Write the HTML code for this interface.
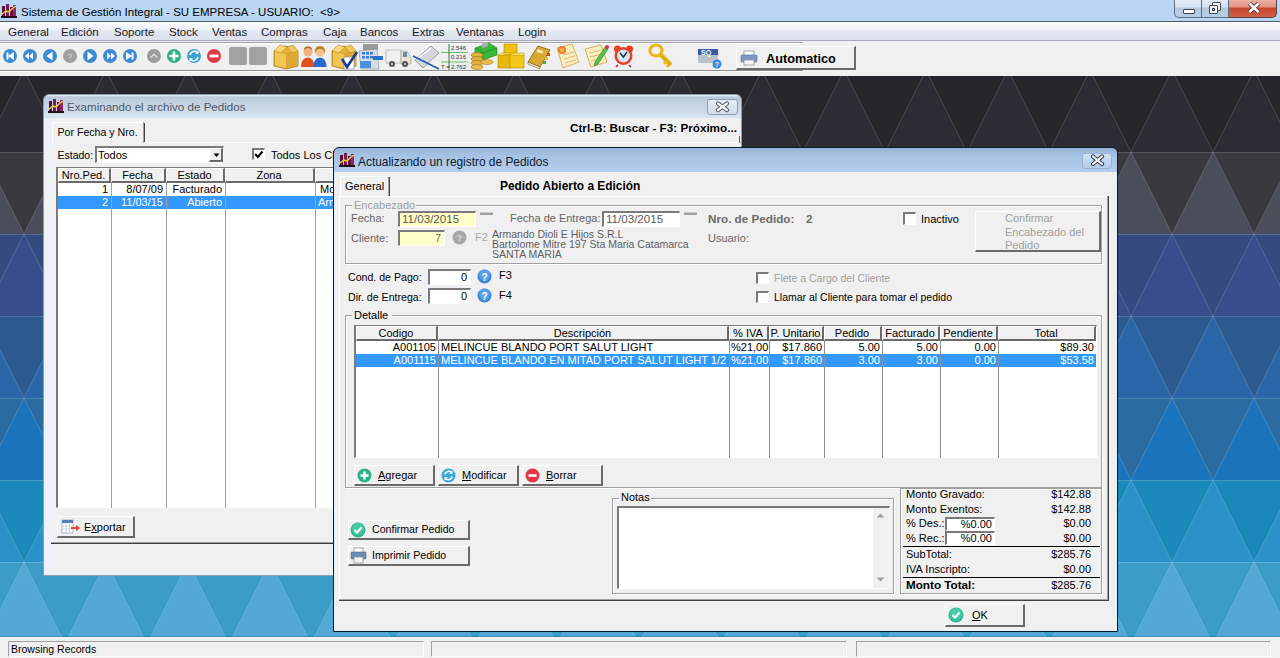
<!DOCTYPE html>
<html><head><meta charset="utf-8">
<style>
*{margin:0;padding:0;box-sizing:border-box}
html,body{width:1280px;height:658px;overflow:hidden;background:#f0f0f0;font-family:"Liberation Sans",sans-serif;font-size:11px;color:#000}
.a{position:absolute}
.t{position:absolute;white-space:nowrap;line-height:13px}
.btn{position:absolute;background:#f0f0f0;border-top:1px solid #fff;border-left:1px solid #fff;border-right:2px solid #6a6a6a;border-bottom:2px solid #6a6a6a}
.sunk{position:absolute;background:#fff;border-top:2px solid #7a7a7a;border-left:2px solid #7a7a7a;border-right:1px solid #fff;border-bottom:1px solid #fff}
svg{position:absolute}
</style></head><body>
<svg width="1280" height="658" style="position:absolute;left:0;top:0"><rect x="0" y="70" width="1280" height="82" fill="#262529"/><polygon points="-58,70 -99,152 -17,152" fill="#2d2b33"/><polygon points="24,70 -17,152 65,152" fill="#2d2b33"/><polygon points="106,70 65,152 147,152" fill="#2d2b33"/><polygon points="188,70 147,152 229,152" fill="#2d2b33"/><polygon points="270,70 229,152 311,152" fill="#2d2b33"/><polygon points="352,70 311,152 393,152" fill="#2d2b33"/><polygon points="434,70 393,152 475,152" fill="#2d2b33"/><polygon points="516,70 475,152 557,152" fill="#2d2b33"/><polygon points="598,70 557,152 639,152" fill="#2d2b33"/><polygon points="680,70 639,152 721,152" fill="#2d2b33"/><polygon points="762,70 721,152 803,152" fill="#2d2b33"/><polygon points="844,70 803,152 885,152" fill="#2d2b33"/><polygon points="926,70 885,152 967,152" fill="#2d2b33"/><polygon points="1008,70 967,152 1049,152" fill="#2d2b33"/><polygon points="1090,70 1049,152 1131,152" fill="#2d2b33"/><polygon points="1172,70 1131,152 1213,152" fill="#2d2b33"/><polygon points="1254,70 1213,152 1295,152" fill="#2d2b33"/><rect x="0" y="152" width="1280" height="82" fill="#383a40"/><polygon points="-17,152 -58,234 24,234" fill="#4a4d5a"/><polygon points="65,152 24,234 106,234" fill="#4a4d5a"/><polygon points="147,152 106,234 188,234" fill="#4a4d5a"/><polygon points="229,152 188,234 270,234" fill="#4a4d5a"/><polygon points="311,152 270,234 352,234" fill="#4a4d5a"/><polygon points="393,152 352,234 434,234" fill="#4a4d5a"/><polygon points="475,152 434,234 516,234" fill="#4a4d5a"/><polygon points="557,152 516,234 598,234" fill="#4a4d5a"/><polygon points="639,152 598,234 680,234" fill="#4a4d5a"/><polygon points="721,152 680,234 762,234" fill="#4a4d5a"/><polygon points="803,152 762,234 844,234" fill="#4a4d5a"/><polygon points="885,152 844,234 926,234" fill="#4a4d5a"/><polygon points="967,152 926,234 1008,234" fill="#4a4d5a"/><polygon points="1049,152 1008,234 1090,234" fill="#4a4d5a"/><polygon points="1131,152 1090,234 1172,234" fill="#4a4d5a"/><polygon points="1213,152 1172,234 1254,234" fill="#4a4d5a"/><polygon points="1295,152 1254,234 1336,234" fill="#4a4d5a"/><rect x="0" y="234" width="1280" height="82" fill="#354a7f"/><polygon points="-58,234 -99,316 -17,316" fill="#384e8c"/><polygon points="24,234 -17,316 65,316" fill="#384e8c"/><polygon points="106,234 65,316 147,316" fill="#384e8c"/><polygon points="188,234 147,316 229,316" fill="#384e8c"/><polygon points="270,234 229,316 311,316" fill="#384e8c"/><polygon points="352,234 311,316 393,316" fill="#384e8c"/><polygon points="434,234 393,316 475,316" fill="#384e8c"/><polygon points="516,234 475,316 557,316" fill="#384e8c"/><polygon points="598,234 557,316 639,316" fill="#384e8c"/><polygon points="680,234 639,316 721,316" fill="#384e8c"/><polygon points="762,234 721,316 803,316" fill="#384e8c"/><polygon points="844,234 803,316 885,316" fill="#384e8c"/><polygon points="926,234 885,316 967,316" fill="#384e8c"/><polygon points="1008,234 967,316 1049,316" fill="#384e8c"/><polygon points="1090,234 1049,316 1131,316" fill="#384e8c"/><polygon points="1172,234 1131,316 1213,316" fill="#384e8c"/><polygon points="1254,234 1213,316 1295,316" fill="#384e8c"/><rect x="0" y="316" width="1280" height="82" fill="#2b5a8e"/><polygon points="-17,316 -58,398 24,398" fill="#2b66a8"/><polygon points="65,316 24,398 106,398" fill="#2b66a8"/><polygon points="147,316 106,398 188,398" fill="#2b66a8"/><polygon points="229,316 188,398 270,398" fill="#2b66a8"/><polygon points="311,316 270,398 352,398" fill="#2b66a8"/><polygon points="393,316 352,398 434,398" fill="#2b66a8"/><polygon points="475,316 434,398 516,398" fill="#2b66a8"/><polygon points="557,316 516,398 598,398" fill="#2b66a8"/><polygon points="639,316 598,398 680,398" fill="#2b66a8"/><polygon points="721,316 680,398 762,398" fill="#2b66a8"/><polygon points="803,316 762,398 844,398" fill="#2b66a8"/><polygon points="885,316 844,398 926,398" fill="#2b66a8"/><polygon points="967,316 926,398 1008,398" fill="#2b66a8"/><polygon points="1049,316 1008,398 1090,398" fill="#2b66a8"/><polygon points="1131,316 1090,398 1172,398" fill="#2b66a8"/><polygon points="1213,316 1172,398 1254,398" fill="#2b66a8"/><polygon points="1295,316 1254,398 1336,398" fill="#2b66a8"/><rect x="0" y="398" width="1280" height="82" fill="#2a6ba2"/><polygon points="-58,398 -99,480 -17,480" fill="#1b74bb"/><polygon points="24,398 -17,480 65,480" fill="#1b74bb"/><polygon points="106,398 65,480 147,480" fill="#1b74bb"/><polygon points="188,398 147,480 229,480" fill="#1b74bb"/><polygon points="270,398 229,480 311,480" fill="#1b74bb"/><polygon points="352,398 311,480 393,480" fill="#1b74bb"/><polygon points="434,398 393,480 475,480" fill="#1b74bb"/><polygon points="516,398 475,480 557,480" fill="#1b74bb"/><polygon points="598,398 557,480 639,480" fill="#1b74bb"/><polygon points="680,398 639,480 721,480" fill="#1b74bb"/><polygon points="762,398 721,480 803,480" fill="#1b74bb"/><polygon points="844,398 803,480 885,480" fill="#1b74bb"/><polygon points="926,398 885,480 967,480" fill="#1b74bb"/><polygon points="1008,398 967,480 1049,480" fill="#1b74bb"/><polygon points="1090,398 1049,480 1131,480" fill="#1b74bb"/><polygon points="1172,398 1131,480 1213,480" fill="#1b74bb"/><polygon points="1254,398 1213,480 1295,480" fill="#1b74bb"/><rect x="0" y="480" width="1280" height="82" fill="#1a88b9"/><polygon points="-17,480 -58,562 24,562" fill="#2b93c9"/><polygon points="65,480 24,562 106,562" fill="#2b93c9"/><polygon points="147,480 106,562 188,562" fill="#2b93c9"/><polygon points="229,480 188,562 270,562" fill="#2b93c9"/><polygon points="311,480 270,562 352,562" fill="#2b93c9"/><polygon points="393,480 352,562 434,562" fill="#2b93c9"/><polygon points="475,480 434,562 516,562" fill="#2b93c9"/><polygon points="557,480 516,562 598,562" fill="#2b93c9"/><polygon points="639,480 598,562 680,562" fill="#2b93c9"/><polygon points="721,480 680,562 762,562" fill="#2b93c9"/><polygon points="803,480 762,562 844,562" fill="#2b93c9"/><polygon points="885,480 844,562 926,562" fill="#2b93c9"/><polygon points="967,480 926,562 1008,562" fill="#2b93c9"/><polygon points="1049,480 1008,562 1090,562" fill="#2b93c9"/><polygon points="1131,480 1090,562 1172,562" fill="#2b93c9"/><polygon points="1213,480 1172,562 1254,562" fill="#2b93c9"/><polygon points="1295,480 1254,562 1336,562" fill="#2b93c9"/><rect x="0" y="562" width="1280" height="82" fill="#3b9cc7"/><polygon points="-58,562 -99,644 -17,644" fill="#52a9d6"/><polygon points="24,562 -17,644 65,644" fill="#52a9d6"/><polygon points="106,562 65,644 147,644" fill="#52a9d6"/><polygon points="188,562 147,644 229,644" fill="#52a9d6"/><polygon points="270,562 229,644 311,644" fill="#52a9d6"/><polygon points="352,562 311,644 393,644" fill="#52a9d6"/><polygon points="434,562 393,644 475,644" fill="#52a9d6"/><polygon points="516,562 475,644 557,644" fill="#52a9d6"/><polygon points="598,562 557,644 639,644" fill="#52a9d6"/><polygon points="680,562 639,644 721,644" fill="#52a9d6"/><polygon points="762,562 721,644 803,644" fill="#52a9d6"/><polygon points="844,562 803,644 885,644" fill="#52a9d6"/><polygon points="926,562 885,644 967,644" fill="#52a9d6"/><polygon points="1008,562 967,644 1049,644" fill="#52a9d6"/><polygon points="1090,562 1049,644 1131,644" fill="#52a9d6"/><polygon points="1172,562 1131,644 1213,644" fill="#52a9d6"/><polygon points="1254,562 1213,644 1295,644" fill="#52a9d6"/><path d="M0 70.5H1280M0 152.5H1280M0 234.5H1280M0 316.5H1280M0 398.5H1280M0 480.5H1280M0 562.5H1280M0 644.5H1280M-960 70L-673 644M-960 70L-1247 644M-878 70L-591 644M-878 70L-1165 644M-796 70L-509 644M-796 70L-1083 644M-714 70L-427 644M-714 70L-1001 644M-632 70L-345 644M-632 70L-919 644M-550 70L-263 644M-550 70L-837 644M-468 70L-181 644M-468 70L-755 644M-386 70L-99 644M-386 70L-673 644M-304 70L-17 644M-304 70L-591 644M-222 70L65 644M-222 70L-509 644M-140 70L147 644M-140 70L-427 644M-58 70L229 644M-58 70L-345 644M24 70L311 644M24 70L-263 644M106 70L393 644M106 70L-181 644M188 70L475 644M188 70L-99 644M270 70L557 644M270 70L-17 644M352 70L639 644M352 70L65 644M434 70L721 644M434 70L147 644M516 70L803 644M516 70L229 644M598 70L885 644M598 70L311 644M680 70L967 644M680 70L393 644M762 70L1049 644M762 70L475 644M844 70L1131 644M844 70L557 644M926 70L1213 644M926 70L639 644M1008 70L1295 644M1008 70L721 644M1090 70L1377 644M1090 70L803 644M1172 70L1459 644M1172 70L885 644M1254 70L1541 644M1254 70L967 644M1336 70L1623 644M1336 70L1049 644M1418 70L1705 644M1418 70L1131 644M1500 70L1787 644M1500 70L1213 644M1582 70L1869 644M1582 70L1295 644M1664 70L1951 644M1664 70L1377 644M1746 70L2033 644M1746 70L1459 644M1828 70L2115 644M1828 70L1541 644M1910 70L2197 644M1910 70L1623 644M1992 70L2279 644M1992 70L1705 644M2074 70L2361 644M2074 70L1787 644M2156 70L2443 644M2156 70L1869 644M2238 70L2525 644M2238 70L1951 644M2320 70L2607 644M2320 70L2033 644M2402 70L2689 644M2402 70L2115 644" stroke="rgba(255,255,255,0.16)" stroke-width="1" fill="none"/></svg><div class="a" style="left:0px;top:0px;width:1280px;height:21px;background:linear-gradient(#bad8f6,#b8d6f4)"></div>
<div class="a" style="left:0px;top:21px;width:1280px;height:1px;background:#4e5a66"></div>
<svg style="left:1px;top:3px" width="16" height="15" viewBox="0 0 16 15">
<rect x="1" y="3" width="3" height="11" fill="#5a1030"/><rect x="5" y="1" width="3" height="13" fill="#7a1a50"/>
<rect x="9" y="4" width="3" height="10" fill="#6a1040"/><rect x="12" y="2" width="3" height="12" fill="#8a2a70"/>
<path d="M1 11 L5 8 L8 9 L12 5 L15 3" stroke="#f0d040" stroke-width="1.5" fill="none"/>
<rect x="0" y="13" width="16" height="2" fill="#201010"/></svg>
<div class="t" style="left:21.0px;top:5.6px;font-size:11.5px;color:#000;">Sistema de Gestión Integral - SU EMPRESA - USUARIO:&nbsp; &lt;9&gt;</div>
<div class="a" style="left:1174px;top:0px;width:28px;height:18px;border:1px solid #5d6d80;border-top:none;border-radius:0 0 0 5px;background:linear-gradient(#e4edf7 0px,#d4e1ef 7px,#b4c8de 8px,#b9cde2 17px)"></div>
<div class="a" style="left:1183px;top:9px;width:12px;height:5px;background:#fff;border:1px solid #3a4656;border-radius:1px"></div>
<div class="a" style="left:1202px;top:0px;width:27px;height:18px;border-right:1px solid #5d6d80;border-bottom:1px solid #5d6d80;background:linear-gradient(#e4edf7 0px,#d4e1ef 7px,#b4c8de 8px,#b9cde2 17px)"></div>
<div class="a" style="left:1212px;top:2px;width:9px;height:9px;border:1px solid #3a4656;background:#f4f6f8;border-radius:1px"></div>
<div class="a" style="left:1209px;top:5px;width:9px;height:9px;border:1px solid #3a4656;background:#f4f6f8;border-radius:1px"></div>
<div class="a" style="left:1212px;top:8px;width:3px;height:3px;border:1px solid #3a4656"></div>
<div class="a" style="left:1229px;top:0px;width:48px;height:18px;border:1px solid #5d4040;border-top:none;border-left:none;border-radius:0 0 5px 0;background:linear-gradient(#eeb0a2 0px,#e29484 7px,#c8462c 8px,#d06048 17px)"></div>
<svg style="left:1247px;top:2px" width="14" height="12" viewBox="0 0 14 12"><path d="M2.5 1.5 L11.5 10 M11.5 1.5 L2.5 10" stroke="#4a3030" stroke-width="4.4"/><path d="M2.5 1.5 L11.5 10 M11.5 1.5 L2.5 10" stroke="#fff" stroke-width="2.6"/></svg>
<div class="a" style="left:0px;top:22px;width:1280px;height:18px;background:linear-gradient(#fbfcfd 0%,#f1f3f8 35%,#e2e6f1 55%,#dde1ee 100%)"></div>
<div class="a" style="left:0px;top:40px;width:1280px;height:1px;background:#a6abb8"></div>
<div class="a" style="left:0px;top:41px;width:1280px;height:35px;background:#f0f0f0"></div>
<div class="t" style="left:8.0px;top:25.7px;font-size:11.5px;color:#1a1a1a;">General</div>
<div class="t" style="left:61.0px;top:25.7px;font-size:11.5px;color:#1a1a1a;">Edición</div>
<div class="t" style="left:114.0px;top:25.7px;font-size:11.5px;color:#1a1a1a;">Soporte</div>
<div class="t" style="left:169.0px;top:25.7px;font-size:11.5px;color:#1a1a1a;">Stock</div>
<div class="t" style="left:212.0px;top:25.7px;font-size:11.5px;color:#1a1a1a;">Ventas</div>
<div class="t" style="left:261.0px;top:25.7px;font-size:11.5px;color:#1a1a1a;">Compras</div>
<div class="t" style="left:323.0px;top:25.7px;font-size:11.5px;color:#1a1a1a;">Caja</div>
<div class="t" style="left:360.0px;top:25.7px;font-size:11.5px;color:#1a1a1a;">Bancos</div>
<div class="t" style="left:412.0px;top:25.7px;font-size:11.5px;color:#1a1a1a;">Extras</div>
<div class="t" style="left:456.0px;top:25.7px;font-size:11.5px;color:#1a1a1a;">Ventanas</div>
<div class="t" style="left:518.0px;top:25.7px;font-size:11.5px;color:#1a1a1a;">Login</div>
<div class="a" style="left:0px;top:42px;width:803px;height:1px;background:#a0a0a0"></div>
<div class="a" style="left:0px;top:43px;width:803px;height:1px;background:#fff"></div>
<div class="a" style="left:0px;top:70px;width:803px;height:1px;background:#8c8c8c"></div>
<div class="a" style="left:0px;top:71px;width:803px;height:1px;background:#fcfcfc"></div>
<div class="a" style="left:0px;top:72px;width:1280px;height:4px;background:#f0f0f0"></div>
<svg style="left:0;top:42px" width="860" height="30" viewBox="0 0 860 30"><circle cx="10" cy="14" r="7" fill="#3a8bd6"/><path d="M6.5 10.5v7h2v-7zM8 14l6-4v8z" fill="#fff"/><circle cx="30" cy="14" r="7" fill="#3a8bd6"/><path d="M25 14l4-3.5v7zM29 14l4-3.5v7z" fill="#fff"/><circle cx="50" cy="14" r="7" fill="#3a8bd6"/><path d="M46.5 14l6-4.5v9z" fill="#fff"/><circle cx="70" cy="14" r="7" fill="#a0a0a0"/><text x="70" y="17" font-size="8" font-family="Liberation Sans" fill="#e8e8e8" text-anchor="middle">?</text><circle cx="90" cy="14" r="7" fill="#3a8bd6"/><path d="M93.5 14l-6-4.5v9z" fill="#fff"/><circle cx="110" cy="14" r="7" fill="#3a8bd6"/><path d="M115 14l-4-3.5v7zM111 14l-4-3.5v7z" fill="#fff"/><circle cx="130" cy="14" r="7" fill="#3a8bd6"/><path d="M133.5 10.5v7h-2v-7zM132 14l-6-4v8z" fill="#fff"/><circle cx="154" cy="14" r="7" fill="#9c9c9c"/><path d="M150.5 15.5l3.5-3 3.5 3" stroke="#e0e0e0" stroke-width="1.6" fill="none"/><circle cx="174" cy="14" r="7" fill="#2eb08a"/><path d="M174 9.5v9M169.5 14h9" stroke="#fff" stroke-width="2.6"/><circle cx="194" cy="14" r="7" fill="#3aa0d6"/><path d="M190 13a4.5 4.5 0 0 1 7.5-2.5M198 15a4.5 4.5 0 0 1-7.5 2.5" stroke="#fff" stroke-width="1.6" fill="none"/><path d="M198.5 8.5v3.5h-3.5zM189.5 19.5v-3.5h3.5z" fill="#fff"/><circle cx="214" cy="14" r="7" fill="#e23848"/><path d="M209.5 14h9" stroke="#fff" stroke-width="2.8"/><rect x="229" y="5" width="18" height="18" rx="2.5" fill="#a2a2a2"/><rect x="249" y="5" width="18" height="18" rx="2.5" fill="#a2a2a2"/><g transform="translate(273,0)"><path d="M1 9 L13 4 L25 9 L25 24 L13 27 L1 24 Z" fill="#e6b43a" stroke="#a87a10" stroke-width="0.8"/><path d="M1 9 L13 12 L25 9 M13 12 L13 27" stroke="#b88a20" stroke-width="0.8" fill="none"/><path d="M2 9 L13 12 L13 26 L2 23Z" fill="#f2c650"/><path d="M13 12 L25 9 L25 23 L13 26Z" fill="#dda830"/><path d="M1 9 L7 3 L14 5 L8 11Z" fill="#f8d878" stroke="#b88a20" stroke-width="0.6"/><path d="M25 9 L20 3 L14 5 L19 11Z" fill="#f0c860" stroke="#b88a20" stroke-width="0.6"/></g><g transform="translate(301,0)"><circle cx="7" cy="10" r="4.5" fill="#f7b080"/><path d="M2.5 9 Q3 4 7 4.5 Q11 4 11.5 9 Q10 6 7 6 Q4 6 2.5 9Z" fill="#b06a20"/><path d="M0 25 Q0 16 7 15.5 Q13 16 13.5 25Z" fill="#e0501a"/><circle cx="19" cy="10" r="4.5" fill="#f7c090"/><path d="M14 12 Q13 4 19 4 Q25 4 24 12 Q23 7 19 7 Q15 7 14 12Z" fill="#c08020"/><path d="M12.5 25 Q12.5 16 19 15.5 Q25.5 16 25.5 25Z" fill="#2a6ad0"/></g><g transform="translate(331,0)"><path d="M1 9 L13 4 L25 9 L25 24 L13 27 L1 24 Z" fill="#e6b43a" stroke="#a87a10" stroke-width="0.8"/><path d="M1 9 L13 12 L25 9 M13 12 L13 27" stroke="#b88a20" stroke-width="0.8" fill="none"/><path d="M2 9 L13 12 L13 26 L2 23Z" fill="#f2c650"/><path d="M13 12 L25 9 L25 23 L13 26Z" fill="#dda830"/><path d="M1 9 L7 3 L14 5 L8 11Z" fill="#f8d878" stroke="#b88a20" stroke-width="0.6"/><path d="M25 9 L20 3 L14 5 L19 11Z" fill="#f0c860" stroke="#b88a20" stroke-width="0.6"/><rect x="13" y="15" width="10" height="12" fill="#fff" stroke="#888" stroke-width="0.6"/><path d="M11 17 L16 25 L26 10" stroke="#1a3a9a" stroke-width="2.6" fill="none"/></g><g transform="translate(357,0)"><rect x="6" y="2" width="15" height="6" fill="#9a9a9a"/><path d="M2 9 L20 7 L22 27 L4 27Z" fill="#d8dde4" stroke="#8090a0" stroke-width="0.6"/><rect x="5" y="10" width="3" height="2.5" fill="#3a7ad8"/><rect x="9" y="10" width="3" height="2.5" fill="#3a7ad8"/><rect x="13" y="10" width="3" height="2.5" fill="#3a7ad8"/><rect x="5" y="14" width="3" height="2.5" fill="#3a7ad8"/><rect x="9" y="14" width="3" height="2.5" fill="#3a7ad8"/><rect x="13" y="14" width="3" height="2.5" fill="#3a7ad8"/><rect x="3" y="19" width="11" height="7" fill="#4a90e0"/><rect x="16" y="14" width="10" height="4" fill="#2a70c8"/></g><g transform="translate(385,0)"><rect x="1" y="8" width="15" height="13" fill="#f0f0ec" stroke="#a0a0a0" stroke-width="0.6"/><path d="M16 9 L22 9 L26 16 L26 22 L16 22Z" fill="#e8e4d8" stroke="#909090" stroke-width="0.6"/><rect x="18" y="10" width="4" height="5" fill="#6a8ab0"/><circle cx="7" cy="22" r="3" fill="#505050"/><circle cx="20" cy="22" r="3" fill="#505050"/><circle cx="7" cy="22" r="1.2" fill="#c0c0c0"/><circle cx="20" cy="22" r="1.2" fill="#c0c0c0"/></g><g transform="translate(413,0)"><path d="M2 18 L18 4 L26 11 L10 26Z" fill="#d4d8dc" stroke="#7a8088" stroke-width="0.7"/><path d="M4 17 L18 6" stroke="#ffffff" stroke-width="1.5"/><path d="M0 14 L26 27" stroke="#2a5aa8" stroke-width="1.8"/></g><g transform="translate(440,0)" font-family="Liberation Sans" font-size="6" fill="#303030"><path d="M9 2V28M1 10.5H28M1 20H28" stroke="#4ab04a" stroke-width="0.8"/><path d="M9 2V28" stroke="#606060" stroke-width="0.6"/><text x="11" y="8">2.546</text><text x="11" y="17">0.216</text><text x="11" y="26.5">2.762</text><text x="1" y="26.5">T =</text></g><g transform="translate(469,0)"><path d="M6 6 L20 1 L28 6 L28 13 L14 18 L6 13Z" fill="#3ab83a" stroke="#1a801a" stroke-width="0.6"/><path d="M6 6 L14 11 L28 6 M14 11 L14 18" stroke="#1a801a" stroke-width="0.6" fill="none"/><rect x="13" y="5" width="6" height="6" fill="#b0b0b0" transform="skewY(-20)"/><ellipse cx="8" cy="13" rx="6" ry="2.5" fill="#e0b040" stroke="#a07818" stroke-width="0.6"/><ellipse cx="8" cy="17" rx="6" ry="2.5" fill="#e0b040" stroke="#a07818" stroke-width="0.6"/><ellipse cx="8" cy="21" rx="6" ry="2.5" fill="#e0b040" stroke="#a07818" stroke-width="0.6"/><ellipse cx="8" cy="25" rx="6" ry="2.5" fill="#e8bc48" stroke="#a07818" stroke-width="0.6"/><ellipse cx="18" cy="20" rx="6" ry="2.5" fill="#e8bc48" stroke="#a07818" stroke-width="0.6"/></g><g transform="translate(497,0)"><rect x="7" y="2" width="13" height="12" fill="#f0c010" stroke="#b08800" stroke-width="0.6"/><rect x="1" y="13" width="13" height="13" fill="#e8b808" stroke="#b08800" stroke-width="0.6"/><rect x="13" y="13" width="14" height="13" fill="#f4c818" stroke="#b08800" stroke-width="0.6"/><path d="M1 13 L4 11 L17 11 M13 13 L16 11 L27 11 L27 13" fill="#fae060" stroke="#b08800" stroke-width="0.5"/></g><g transform="translate(526,0)"><path d="M2 20 L12 4 L24 8 L14 25Z" fill="#d8a830" stroke="#805a10" stroke-width="0.8"/><path d="M2 20 L14 25 L14 27 L2 22Z" fill="#f4f0e0" stroke="#805a10" stroke-width="0.6"/><rect x="11" y="8" width="6" height="3" fill="#f8e8b0" transform="rotate(18 14 9)"/><rect x="21" y="11" width="3" height="3" fill="#e04020"/><rect x="19" y="15" width="3" height="3" fill="#f0c020"/><rect x="17" y="19" width="3" height="3" fill="#40b040"/></g><g transform="translate(554,0)"><path d="M3 6 L18 2 L25 20 L9 26Z" fill="#fbefc0" stroke="#c8a050" stroke-width="0.8"/><path d="M9 13 L20 10 M10 17 L21 14 M11 21 L22 18" stroke="#d0a860" stroke-width="0.8"/><circle cx="8" cy="8" r="4" fill="#f07a30"/><circle cx="8" cy="8" r="2" fill="#f8c040"/></g><g transform="translate(583,0)"><path d="M2 7 L18 3 L24 20 L8 25Z" fill="#fbefc0" stroke="#c8a050" stroke-width="0.8"/><path d="M6 11 L18 8 M7 15 L19 12 M8 19 L15 17" stroke="#d0a860" stroke-width="0.8"/><path d="M12 20 L22 5 L25 7 L15 22 L11 24Z" fill="#5ac04a" stroke="#2a7a20" stroke-width="0.6"/><circle cx="24" cy="5" r="2" fill="#e03030"/></g><g transform="translate(613,0)"><circle cx="4.5" cy="7" r="3.5" fill="#e84020"/><circle cx="16.5" cy="7" r="3.5" fill="#e84020"/><circle cx="10.5" cy="14" r="9" fill="#e84020"/><circle cx="10.5" cy="14" r="6.5" fill="#cfe8f8"/><path d="M7 11 L10.5 15 L14 10" stroke="#202830" stroke-width="1.4" fill="none"/><path d="M5 23 L3 25 M16 23 L18 25" stroke="#c03018" stroke-width="1.6"/></g><g transform="translate(649,0)"><ellipse cx="7" cy="8.5" rx="6" ry="5.5" fill="none" stroke="#e8b818" stroke-width="3.2"/><path d="M11 12 L22 23" stroke="#e8b818" stroke-width="4.5"/><path d="M17 19 L15 22 M20 22 L18 25" stroke="#e8b818" stroke-width="3"/><path d="M11 12 L22 23" stroke="#b88a00" stroke-width="0.6" fill="none"/></g><g transform="translate(698,0)"><rect x="0" y="7" width="20" height="14" fill="#b8c0cc"/><rect x="0" y="7" width="20" height="6" fill="#3a5aa8"/><text x="3" y="13" font-family="Liberation Sans" font-weight="bold" font-size="7" fill="#fff">SQ</text><circle cx="19" cy="22" r="4.5" fill="#3a8ad8"/><text x="19" y="25" font-family="Liberation Sans" font-weight="bold" font-size="6.5" fill="#fff" text-anchor="middle">?</text></g></svg>
<div class="btn" style="left:736px;top:46px;width:120px;height:24px"></div>
<svg style="left:740px;top:50px" width="18" height="16" viewBox="0 0 18 16"><rect x="4" y="1" width="10" height="5" fill="#fff" stroke="#8a949e" stroke-width="0.8"/><rect x="1" y="5" width="16" height="7" rx="1" fill="#7a9ac0" stroke="#5a6a80" stroke-width="0.6"/><rect x="4" y="10" width="10" height="5" fill="#f4f4f4" stroke="#8a949e" stroke-width="0.8"/></svg>
<div class="t" style="left:766.0px;top:53.0px;font-size:12.7px;font-weight:bold;color:#000;">Automatico</div>
<div class="a" style="left:43px;top:94px;width:699px;height:482px;border:1px solid #8d9bab;border-radius:6px 6px 0 0;background:linear-gradient(#eef3f8 0px,#bac9da 2px,#c6d4e3 10px,#d8e5f2 23px,#eef2f7 24px,#eef2f7 100%)"></div>
<div class="a" style="left:51px;top:118px;width:687px;height:452px;background:#f0f0f0"></div>
<svg style="left:48px;top:98px" width="16" height="15" viewBox="0 0 16 15">
<rect x="1" y="3" width="3" height="11" fill="#5a1030"/><rect x="5" y="1" width="3" height="13" fill="#7a1a50"/>
<rect x="9" y="4" width="3" height="10" fill="#6a1040"/><rect x="12" y="2" width="3" height="12" fill="#8a2a70"/>
<path d="M1 11 L5 8 L8 9 L12 5 L15 3" stroke="#f0d040" stroke-width="1.5" fill="none"/>
<rect x="0" y="13" width="16" height="2" fill="#201010"/></svg>
<div class="t" style="left:67.0px;top:100.1px;font-size:11.6px;color:#4d5866;">Examinando el archivo de Pedidos</div>
<div class="a" style="left:707px;top:99px;width:31px;height:16px;border:1px solid #8d9db3;border-radius:3px;background:linear-gradient(#e6edf5,#d2dde9)"></div>
<svg style="left:715px;top:100px" width="15" height="13" viewBox="0 0 15 13"><path d="M3 3.5 L12 10 M12 3.5 L3 10" stroke="#4a5868" stroke-width="4.2" stroke-linecap="round"/><path d="M3 3.5 L12 10 M12 3.5 L3 10" stroke="#f4f6f8" stroke-width="2.2" stroke-linecap="round"/></svg>
<div class="a" style="left:52px;top:122px;width:1px;height:21px;background:#fff"></div>
<div class="a" style="left:52px;top:122px;width:92px;height:1px;background:#fff"></div>
<div class="a" style="left:143px;top:122px;width:1px;height:21px;background:#a0a0a0"></div>
<div class="a" style="left:144px;top:123px;width:1px;height:20px;background:#404040"></div>
<div class="t" style="left:57.5px;top:126.2px;font-size:10.6px;color:#000;">Por Fecha y Nro.</div>
<div class="t" style="left:570.0px;top:121.3px;font-size:11.7px;font-weight:bold;color:#000;">Ctrl-B: Buscar - F3: Próximo...</div>
<div class="a" style="left:144px;top:142px;width:595px;height:1px;background:#fff"></div>
<div class="a" style="left:739px;top:136px;width:1px;height:7px;background:#606060"></div>
<div class="t" style="left:57.5px;top:148.5px;font-size:10.5px;color:#000;">Estado:</div>
<div class="sunk" style="left:95px;top:146px;width:129px;height:17px;background:#fff"></div>
<div class="t" style="left:98.0px;top:148.7px;font-size:11.0px;color:#000;">Todos</div>
<div class="btn" style="left:209px;top:148px;width:14px;height:14px"></div>
<svg style="left:213px;top:153px" width="7" height="5"><path d="M0.5 0.5H6.5L3.5 4Z" fill="#000"/></svg>
<div class="sunk" style="left:252px;top:148px;width:13px;height:12px;background:#fff"></div>
<svg style="left:254px;top:150px" width="10" height="9"><path d="M1.2 4 L3.8 7 L8.5 1.5" stroke="#000" stroke-width="2" fill="none"/></svg>
<div class="t" style="left:271.0px;top:148.7px;font-size:11.0px;color:#000;">Todos Los Clientes</div>
<div class="sunk" style="left:56px;top:167px;width:287px;height:341px;background:#fff"></div>
<div class="btn" style="left:58px;top:168px;width:53px;height:15px"></div>
<div class="btn" style="left:111px;top:168px;width:55px;height:15px"></div>
<div class="btn" style="left:166px;top:168px;width:59px;height:15px"></div>
<div class="btn" style="left:225px;top:168px;width:90px;height:15px"></div>
<div class="btn" style="left:315px;top:168px;width:85px;height:15px"></div>
<div class="t" style="left:58.0px;width:51.0px;text-align:center;top:168.7px;font-size:11.0px;color:#000;">Nro.Ped.</div>
<div class="t" style="left:111.0px;width:53.0px;text-align:center;top:168.7px;font-size:11.0px;color:#000;">Fecha</div>
<div class="t" style="left:166.0px;width:57.0px;text-align:center;top:168.7px;font-size:11.0px;color:#000;">Estado</div>
<div class="t" style="left:225.0px;width:88.0px;text-align:center;top:168.7px;font-size:11.0px;color:#000;">Zona</div>
<div class="a" style="left:58px;top:196px;width:290px;height:13px;background:#3399ff"></div>
<div class="a" style="left:111px;top:183px;width:1px;height:325px;background:#a0a0a0"></div>
<div class="a" style="left:166px;top:183px;width:1px;height:325px;background:#a0a0a0"></div>
<div class="a" style="left:225px;top:183px;width:1px;height:325px;background:#a0a0a0"></div>
<div class="a" style="left:315px;top:183px;width:1px;height:325px;background:#a0a0a0"></div>
<div class="t" style="right:1172.0px;top:183.2px;font-size:11.0px;color:#000;">1</div>
<div class="t" style="right:1117.0px;top:183.2px;font-size:11.0px;color:#000;">8/07/09</div>
<div class="t" style="right:1058.0px;top:183.2px;font-size:11.0px;color:#000;">Facturado</div>
<div class="t" style="left:320.0px;top:183.2px;font-size:11.0px;color:#000;">Mostrador</div>
<div class="t" style="right:1172.0px;top:196.2px;font-size:11.0px;color:#fff;">2</div>
<div class="t" style="right:1117.0px;top:196.2px;font-size:11.0px;color:#fff;">11/03/15</div>
<div class="t" style="right:1058.0px;top:196.2px;font-size:11.0px;color:#fff;">Abierto</div>
<div class="t" style="left:318.0px;top:196.2px;font-size:11.0px;color:#fff;">Armando</div>
<div class="btn" style="left:57px;top:516px;width:78px;height:22px"></div>
<svg style="left:61px;top:519px" width="22" height="16" viewBox="0 0 22 16"><rect x="1" y="1" width="11" height="13" fill="#fff" stroke="#a0a8b8" stroke-width="0.8"/><rect x="1" y="1" width="11" height="3" fill="#5a7ab8"/><path d="M1 7H12M1 10H12M5 4V14M8.5 4V14" stroke="#c0c8d8" stroke-width="0.7"/><path d="M10 9H17" stroke="#e04030" stroke-width="1.8"/><path d="M15 6L19 9L15 12Z" fill="#e04030"/></svg>
<div class="t" style="left:84.0px;top:520.7px;font-size:11.0px;color:#000;">E<u>x</u>portar</div>
<div class="a" style="left:51px;top:542px;width:691px;height:1px;background:#a0a0a0"></div>
<div class="a" style="left:51px;top:543px;width:691px;height:1px;background:#404040"></div>
<div class="a" style="left:333px;top:147px;width:785px;height:485px;border:1px solid #0e1a2a;border-radius:6px 6px 0 0;background:linear-gradient(#98b6da 0px,#a9c5e6 10px,#b3cdeb 24px,#e4f0fa 25px)"></div>
<div class="a" style="left:335px;top:172px;width:781px;height:458px;background:#f0f0f0"></div>
<svg style="left:339px;top:152px" width="16" height="15" viewBox="0 0 16 15">
<rect x="1" y="3" width="3" height="11" fill="#5a1030"/><rect x="5" y="1" width="3" height="13" fill="#7a1a50"/>
<rect x="9" y="4" width="3" height="10" fill="#6a1040"/><rect x="12" y="2" width="3" height="12" fill="#8a2a70"/>
<path d="M1 11 L5 8 L8 9 L12 5 L15 3" stroke="#f0d040" stroke-width="1.5" fill="none"/>
<rect x="0" y="13" width="16" height="2" fill="#201010"/></svg>
<div class="t" style="left:358.0px;top:155.7px;font-size:11.9px;color:#0a1a30;">Actualizando un registro de Pedidos</div>
<div class="a" style="left:1082px;top:153px;width:30px;height:16px;border:1px solid #9ab4d4;border-radius:3px;background:linear-gradient(#d4e4f4,#c0d6ee 50%,#b4cce8)"></div>
<svg style="left:1090px;top:154px" width="15" height="13" viewBox="0 0 15 13"><path d="M3 2.5 L12 10 M12 2.5 L3 10" stroke="#2e3a48" stroke-width="4.2" stroke-linecap="round"/><path d="M3 2.5 L12 10 M12 2.5 L3 10" stroke="#f8fafc" stroke-width="2.2" stroke-linecap="round"/></svg>
<div class="a" style="left:340px;top:176px;width:1px;height:21px;background:#fff"></div>
<div class="a" style="left:340px;top:176px;width:49px;height:1px;background:#fff"></div>
<div class="a" style="left:388px;top:177px;width:1px;height:20px;background:#a0a0a0"></div>
<div class="a" style="left:389px;top:177px;width:1px;height:20px;background:#404040"></div>
<div class="t" style="left:345.0px;top:179.7px;font-size:11.0px;color:#000;">General</div>
<div class="t" style="left:500.0px;top:180.4px;font-size:11.9px;font-weight:bold;color:#000;">Pedido Abierto a Edición</div>
<div class="a" style="left:339px;top:196px;width:770px;height:1px;background:#fff"></div>
<div class="a" style="left:339px;top:196px;width:1px;height:404px;background:#fff"></div>
<div class="a" style="left:1107px;top:196px;width:1px;height:404px;background:#a0a0a0"></div>
<div class="a" style="left:1108px;top:196px;width:1px;height:405px;background:#404040"></div>
<div class="a" style="left:339px;top:599px;width:769px;height:1px;background:#a0a0a0"></div>
<div class="a" style="left:339px;top:600px;width:770px;height:1px;background:#404040"></div>
<div class="a" style="left:345px;top:205px;width:757px;height:59px;border:1px solid #a0a0a0;box-shadow:1px 1px 0 #fff, inset 1px 1px 0 #fff"></div>
<div class="a" style="left:352px;top:199px;width:64px;height:12px;background:#f0f0f0"></div>
<div class="t" style="left:354.0px;top:198.7px;font-size:11.0px;color:#a0a0a0;">Encabezado</div>
<div class="t" style="left:351.0px;top:211.7px;font-size:11.0px;color:#666;">Fecha:</div>
<div class="sunk" style="left:398px;top:211px;width:78px;height:16px;background:#ffffc8"></div>
<div class="t" style="left:402.0px;top:212.4px;font-size:11.6px;color:#5a5a50;">11/03/2015</div>
<div class="a" style="left:480px;top:212px;width:13px;height:3px;background:#a0a0a0;border-top:1px solid #c8c8c8"></div>
<div class="t" style="left:510.0px;top:211.7px;font-size:11.0px;color:#666;">Fecha de Entrega:</div>
<div class="sunk" style="left:602px;top:211px;width:78px;height:16px;background:#fff"></div>
<div class="t" style="left:606.0px;top:212.4px;font-size:11.6px;color:#5a5a5a;">11/03/2015</div>
<div class="a" style="left:684px;top:212px;width:13px;height:3px;background:#a0a0a0;border-top:1px solid #c8c8c8"></div>
<div class="t" style="left:708.0px;top:211.8px;font-size:11.7px;font-weight:bold;color:#6a6a6a;">Nro. de Pedido:</div>
<div class="t" style="left:806.0px;top:211.8px;font-size:11.7px;font-weight:bold;color:#6a6a6a;">2</div>
<div class="t" style="left:351.0px;top:231.7px;font-size:11.0px;color:#666;">Cliente:</div>
<div class="sunk" style="left:398px;top:230px;width:47px;height:16px;background:#ffffc8"></div>
<div class="t" style="right:839.0px;top:232.2px;font-size:11.0px;color:#666;">7</div>
<svg style="left:452px;top:230px" width="15" height="15"><circle cx="7.5" cy="7.5" r="7" fill="#a8a8a8"/><text x="7.5" y="11" font-family="Liberation Sans" font-weight="bold" font-size="9" fill="#d8d8d8" text-anchor="middle">?</text></svg>
<div class="t" style="left:475.0px;top:231.2px;font-size:11.0px;color:#a8a8a8;">F2</div>
<div class="t" style="left:492.0px;top:227.5px;font-size:10.5px;color:#5e5e5e;">Armando Dioli E Hijos S.R.L</div>
<div class="t" style="left:492.0px;top:237.5px;font-size:10.5px;color:#5e5e5e;">Bartolome Mitre 197 Sta Maria Catamarca</div>
<div class="t" style="left:492.0px;top:247.5px;font-size:10.5px;color:#5e5e5e;">SANTA MARIA</div>
<div class="t" style="left:708.0px;top:231.7px;font-size:11.0px;color:#666;">Usuario:</div>
<div class="sunk" style="left:903px;top:212px;width:13px;height:13px;background:#fff"></div>
<div class="t" style="left:921.0px;top:213.0px;font-size:11.0px;color:#000;">Inactivo</div>
<div class="btn" style="left:975px;top:211px;width:126px;height:41px"></div>
<div class="t" style="left:1005.0px;top:212.2px;font-size:11.0px;color:#a0a0a0;">Confirmar</div>
<div class="t" style="left:1005.0px;top:225.7px;font-size:11.0px;color:#a0a0a0;">Encabezado del</div>
<div class="t" style="left:1005.0px;top:238.7px;font-size:11.0px;color:#a0a0a0;">Pedido</div>
<div class="t" style="left:348.0px;top:271.2px;font-size:10.6px;color:#000;">Cond. de Pago:</div>
<div class="sunk" style="left:428px;top:269px;width:43px;height:16px;background:#fff"></div>
<div class="t" style="right:813.0px;top:270.7px;font-size:11.0px;color:#000;">0</div>
<svg style="left:477px;top:269px" width="15" height="15"><circle cx="7.5" cy="7.5" r="7" fill="#3a86d8"/><circle cx="7.5" cy="6" r="5.5" fill="#5aa0e8"/><text x="7.5" y="11.5" font-family="Liberation Sans" font-weight="bold" font-size="10" fill="#fff" text-anchor="middle">?</text></svg>
<div class="t" style="left:499.0px;top:269.2px;font-size:11.0px;color:#000;">F3</div>
<div class="t" style="left:348.0px;top:290.5px;font-size:10.6px;color:#000;">Dir. de Entrega:</div>
<div class="sunk" style="left:428px;top:288px;width:43px;height:16px;background:#fff"></div>
<div class="t" style="right:813.0px;top:290.2px;font-size:11.0px;color:#000;">0</div>
<svg style="left:477px;top:288px" width="15" height="15"><circle cx="7.5" cy="7.5" r="7" fill="#3a86d8"/><circle cx="7.5" cy="6" r="5.5" fill="#5aa0e8"/><text x="7.5" y="11.5" font-family="Liberation Sans" font-weight="bold" font-size="10" fill="#fff" text-anchor="middle">?</text></svg>
<div class="t" style="left:499.0px;top:289.2px;font-size:11.0px;color:#000;">F4</div>
<div class="sunk" style="left:756px;top:272px;width:13px;height:12px;background:#f0f0f0"></div>
<div class="a" style="left:758px;top:274px;width:10px;height:9px;background:#fff"></div>
<div class="t" style="left:774.0px;top:272.0px;font-size:10.5px;color:#a0a0a0;">Flete a Cargo del Cliente</div>
<div class="sunk" style="left:756px;top:291px;width:13px;height:12px;background:#fff"></div>
<div class="t" style="left:774.0px;top:291.0px;font-size:10.5px;color:#000;">Llamar al Cliente para tomar el pedido</div>
<div class="a" style="left:345px;top:315px;width:757px;height:173px;border:1px solid #a0a0a0;box-shadow:1px 1px 0 #fff, inset 1px 1px 0 #fff"></div>
<div class="a" style="left:352px;top:309px;width:40px;height:12px;background:#f0f0f0"></div>
<div class="t" style="left:354.0px;top:308.7px;font-size:11.0px;color:#000;">Detalle</div>
<div class="sunk" style="left:354px;top:325px;width:743px;height:133px;background:#fff"></div>
<div class="btn" style="left:356px;top:326px;width:82px;height:15px"></div>
<div class="btn" style="left:438px;top:326px;width:291px;height:15px"></div>
<div class="btn" style="left:729px;top:326px;width:40px;height:15px"></div>
<div class="btn" style="left:769px;top:326px;width:55px;height:15px"></div>
<div class="btn" style="left:824px;top:326px;width:58px;height:15px"></div>
<div class="btn" style="left:882px;top:326px;width:58px;height:15px"></div>
<div class="btn" style="left:940px;top:326px;width:58px;height:15px"></div>
<div class="btn" style="left:998px;top:326px;width:98px;height:15px"></div>
<div class="t" style="left:356.0px;width:80.0px;text-align:center;top:327.2px;font-size:11.0px;color:#000;">Codigo</div>
<div class="t" style="left:438.0px;width:289.0px;text-align:center;top:327.2px;font-size:11.0px;color:#000;">Descripción</div>
<div class="t" style="left:729.0px;width:38.0px;text-align:center;top:327.2px;font-size:11.0px;color:#000;">% IVA</div>
<div class="t" style="left:769.0px;width:53.0px;text-align:center;top:327.2px;font-size:11.0px;color:#000;">P. Unitario</div>
<div class="t" style="left:824.0px;width:56.0px;text-align:center;top:327.2px;font-size:11.0px;color:#000;">Pedido</div>
<div class="t" style="left:882.0px;width:56.0px;text-align:center;top:327.2px;font-size:11.0px;color:#000;">Facturado</div>
<div class="t" style="left:940.0px;width:56.0px;text-align:center;top:327.2px;font-size:11.0px;color:#000;">Pendiente</div>
<div class="t" style="left:998.0px;width:96.0px;text-align:center;top:327.2px;font-size:11.0px;color:#000;">Total</div>
<div class="a" style="left:356px;top:354px;width:740px;height:13px;background:#3399ff"></div>
<div class="a" style="left:438px;top:341px;width:1px;height:117px;background:#909090"></div>
<div class="a" style="left:729px;top:341px;width:1px;height:117px;background:#909090"></div>
<div class="a" style="left:769px;top:341px;width:1px;height:117px;background:#909090"></div>
<div class="a" style="left:824px;top:341px;width:1px;height:117px;background:#909090"></div>
<div class="a" style="left:882px;top:341px;width:1px;height:117px;background:#909090"></div>
<div class="a" style="left:940px;top:341px;width:1px;height:117px;background:#909090"></div>
<div class="a" style="left:998px;top:341px;width:1px;height:117px;background:#909090"></div>
<div class="t" style="right:844.0px;top:341.2px;font-size:11.0px;color:#000;">A001105</div>
<div class="t" style="left:441.0px;top:341.2px;font-size:11.0px;color:#000;">MELINCUE BLANDO PORT SALUT LIGHT</div>
<div class="t" style="left:731.0px;top:341.2px;font-size:11.0px;color:#000;">%21,00</div>
<div class="t" style="right:458.0px;top:341.2px;font-size:11.0px;color:#000;">$17.860</div>
<div class="t" style="right:400.0px;top:341.2px;font-size:11.0px;color:#000;">5.00</div>
<div class="t" style="right:342.0px;top:341.2px;font-size:11.0px;color:#000;">5.00</div>
<div class="t" style="right:284.0px;top:341.2px;font-size:11.0px;color:#000;">0.00</div>
<div class="t" style="right:186.0px;top:341.2px;font-size:11.0px;color:#000;">$89.30</div>
<div class="t" style="right:844.0px;top:354.2px;font-size:11.0px;color:#fff;">A001115</div>
<div class="t" style="left:441.0px;top:354.2px;font-size:11.0px;color:#fff;">MELINCUE BLANDO EN MITAD PORT SALUT LIGHT 1/2</div>
<div class="t" style="left:731.0px;top:354.2px;font-size:11.0px;color:#fff;">%21,00</div>
<div class="t" style="right:458.0px;top:354.2px;font-size:11.0px;color:#fff;">$17.860</div>
<div class="t" style="right:400.0px;top:354.2px;font-size:11.0px;color:#fff;">3.00</div>
<div class="t" style="right:342.0px;top:354.2px;font-size:11.0px;color:#fff;">3.00</div>
<div class="t" style="right:284.0px;top:354.2px;font-size:11.0px;color:#fff;">0.00</div>
<div class="t" style="right:186.0px;top:354.2px;font-size:11.0px;color:#fff;">$53.58</div>
<div class="btn" style="left:354px;top:465px;width:81px;height:21px"></div>
<div class="btn" style="left:438px;top:465px;width:81px;height:21px"></div>
<div class="btn" style="left:522px;top:465px;width:81px;height:21px"></div>
<svg style="left:357px;top:468px" width="15" height="15"><circle cx="7.5" cy="7.5" r="7" fill="#2eb08a"/><path d="M7.5 3.5v8M3.5 7.5h8" stroke="#fff" stroke-width="2.4"/></svg>
<svg style="left:441px;top:468px" width="15" height="15"><circle cx="7.5" cy="7.5" r="7" fill="#3aa6d8"/><path d="M3.8 6.5a4 4 0 0 1 6.8-2M11.2 8.5a4 4 0 0 1-6.8 2" stroke="#fff" stroke-width="1.5" fill="none"/><path d="M11.5 2.5v3.5h-3.5zM3.5 12.5v-3.5h3.5z" fill="#fff"/></svg>
<svg style="left:525px;top:468px" width="15" height="15"><circle cx="7.5" cy="7.5" r="7" fill="#e23848"/><path d="M3.5 7.5h8" stroke="#fff" stroke-width="2.6"/></svg>
<div class="t" style="left:378.0px;top:469.2px;font-size:11.0px;color:#000;"><u>A</u>gregar</div>
<div class="t" style="left:462.0px;top:469.2px;font-size:11.0px;color:#000;"><u>M</u>odificar</div>
<div class="t" style="left:546.0px;top:469.2px;font-size:11.0px;color:#000;"><u>B</u>orrar</div>
<div class="btn" style="left:348px;top:520px;width:122px;height:20px"></div>
<div class="btn" style="left:348px;top:546px;width:122px;height:20px"></div>
<svg style="left:350px;top:522px" width="16" height="16"><circle cx="8" cy="8" r="7.5" fill="#2eb894"/><circle cx="8" cy="7" r="6" fill="#48c8a4"/><path d="M4.5 8 L7 10.5 L11.5 5.5" stroke="#fff" stroke-width="2" fill="none"/></svg>
<svg style="left:350px;top:547px" width="17" height="17" viewBox="0 0 17 17"><rect x="4" y="1" width="9" height="5" fill="#fff" stroke="#8a949e" stroke-width="0.8"/><rect x="1" y="5" width="15" height="7" rx="1" fill="#6a8ab8" stroke="#5a6a80" stroke-width="0.6"/><rect x="4" y="10" width="9" height="6" fill="#f4f4f4" stroke="#8a949e" stroke-width="0.8"/></svg>
<div class="t" style="left:372.0px;top:523.4px;font-size:10.6px;color:#000;">Confirmar Pedido</div>
<div class="t" style="left:372.0px;top:549.4px;font-size:10.6px;color:#000;">Imprimir Pedido</div>
<div class="a" style="left:612px;top:498px;width:282px;height:96px;border:1px solid #a0a0a0;box-shadow:1px 1px 0 #fff, inset 1px 1px 0 #fff"></div>
<div class="a" style="left:619px;top:492px;width:32px;height:12px;background:#f0f0f0"></div>
<div class="t" style="left:621.0px;top:491.2px;font-size:11.0px;color:#000;">Notas</div>
<div class="sunk" style="left:617px;top:506px;width:273px;height:83px;background:#fff"></div>
<div class="a" style="left:873px;top:508px;width:16px;height:80px;background:#f0f0f0"></div>
<svg style="left:876px;top:512px" width="9" height="7"><path d="M0.5 5.5 L4.5 1.5 L8.5 5.5Z" fill="#a0a0a0"/></svg>
<svg style="left:876px;top:576px" width="9" height="7"><path d="M0.5 1.5 L4.5 5.5 L8.5 1.5Z" fill="#a0a0a0"/></svg>
<div class="a" style="left:900px;top:488px;width:202px;height:106px;border:1px solid #a0a0a0;box-shadow:1px 1px 0 #fff, inset 1px 1px 0 #fff"></div>
<div class="t" style="left:906.0px;top:487.7px;font-size:11.0px;color:#000;">Monto Gravado:</div>
<div class="t" style="right:189.0px;top:487.7px;font-size:11.0px;color:#000;">$142.88</div>
<div class="t" style="left:906.0px;top:502.7px;font-size:11.0px;color:#000;">Monto Exentos:</div>
<div class="t" style="right:189.0px;top:502.7px;font-size:11.0px;color:#000;">$142.88</div>
<div class="t" style="left:906.0px;top:517.2px;font-size:11.0px;color:#000;">% Des.:</div>
<div class="sunk" style="left:945px;top:517px;width:50px;height:14px;background:#fff"></div>
<div class="t" style="right:288.0px;top:517.7px;font-size:11.0px;color:#000;">%0.00</div>
<div class="t" style="right:189.0px;top:517.2px;font-size:11.0px;color:#000;">$0.00</div>
<div class="t" style="left:906.0px;top:531.7px;font-size:11.0px;color:#000;">% Rec.:</div>
<div class="sunk" style="left:945px;top:531px;width:50px;height:14px;background:#fff"></div>
<div class="t" style="right:288.0px;top:531.7px;font-size:11.0px;color:#000;">%0.00</div>
<div class="t" style="right:189.0px;top:531.7px;font-size:11.0px;color:#000;">$0.00</div>
<div class="a" style="left:903px;top:546px;width:197px;height:1px;background:#000"></div>
<div class="t" style="left:906.0px;top:547.7px;font-size:11.0px;color:#000;">SubTotal:</div>
<div class="t" style="right:189.0px;top:547.7px;font-size:11.0px;color:#000;">$285.76</div>
<div class="t" style="left:906.0px;top:562.7px;font-size:11.0px;color:#000;">IVA Inscripto:</div>
<div class="t" style="right:189.0px;top:562.7px;font-size:11.0px;color:#000;">$0.00</div>
<div class="a" style="left:903px;top:577px;width:197px;height:1px;background:#000"></div>
<div class="t" style="left:906.0px;top:578.3px;font-size:11.7px;font-weight:bold;color:#000;">Monto Total:</div>
<div class="t" style="right:189.0px;top:578.7px;font-size:11.0px;color:#000;">$285.76</div>
<div class="btn" style="left:945px;top:604px;width:80px;height:23px"></div>
<svg style="left:948px;top:607px" width="16" height="16"><circle cx="8" cy="8" r="7.5" fill="#2eb894"/><circle cx="8" cy="7" r="6" fill="#48c8a4"/><path d="M4.5 8 L7 10.5 L11.5 5.5" stroke="#fff" stroke-width="2" fill="none"/></svg>
<div class="t" style="left:972.0px;top:609.2px;font-size:11.0px;color:#000;"><u>O</u>K</div>
<div class="a" style="left:0px;top:636px;width:1280px;height:1px;background:rgba(0,40,80,0.25)"></div>
<div class="a" style="left:0px;top:637px;width:1280px;height:21px;background:#f0f0f0;border-top:1px solid #fafafa"></div>
<div class="a" style="left:8px;top:641px;width:416px;height:16px;border-top:1px solid #a0a0a0;border-left:1px solid #a0a0a0;border-right:1px solid #fff;border-bottom:1px solid #fff"></div>
<div class="a" style="left:431px;top:641px;width:416px;height:16px;border-top:1px solid #a0a0a0;border-left:1px solid #a0a0a0;border-right:1px solid #fff;border-bottom:1px solid #fff"></div>
<div class="a" style="left:856px;top:641px;width:415px;height:16px;border-top:1px solid #a0a0a0;border-left:1px solid #a0a0a0;border-right:1px solid #fff;border-bottom:1px solid #fff"></div>
<div class="t" style="left:11.0px;top:642.5px;font-size:10.5px;color:#000;">Browsing Records</div>
</body></html>
